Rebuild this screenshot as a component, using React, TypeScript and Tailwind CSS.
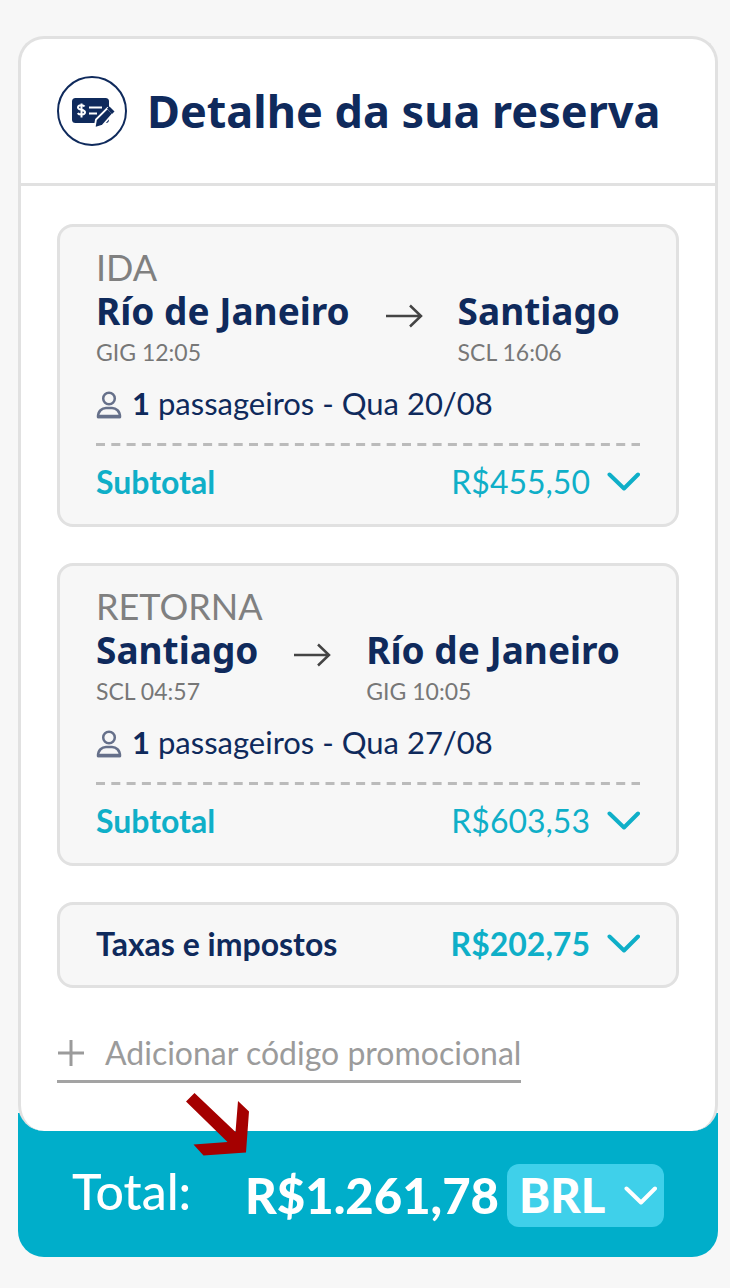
import React from "react";

type Stop = { city: string; code: string; time: string };
type Leg = {
  label: string;
  from: Stop;
  to: Stop;
  passengers: number;
  date: string;
  subtotal: string;
};

const legs: Leg[] = [
  {
    label: "IDA",
    from: { city: "Río de Janeiro", code: "GIG", time: "12:05" },
    to: { city: "Santiago", code: "SCL", time: "16:06" },
    passengers: 1,
    date: "Qua 20/08",
    subtotal: "R$455,50",
  },
  {
    label: "RETORNA",
    from: { city: "Santiago", code: "SCL", time: "04:57" },
    to: { city: "Río de Janeiro", code: "GIG", time: "10:05" },
    passengers: 1,
    date: "Qua 27/08",
    subtotal: "R$603,53",
  },
];

function BookingIcon() {
  return (
    <svg viewBox="0 0 70 70" className="size-[70px] shrink-0 text-[#0f2a5c]" aria-hidden="true">
      <circle cx="35" cy="35" r="34" fill="none" stroke="currentColor" strokeWidth="2" />
      <rect x="15" y="22" width="37" height="25" rx="3.5" fill="currentColor" />
      <path
        d="M27.500 30.500c-1-1.800-6.500-2-6.500.9 0 3.200 7 1.600 7 4.900 0 2.900-5.700 2.900-7.300.8M24.500 27.500v14"
        fill="none"
        stroke="white"
        strokeWidth="2"
      />
      <path d="M32 31.500h13M32 37.500h8" stroke="white" strokeWidth="2.200" />
      <path
        d="M37.500 52l1.500-8.500L50.500 32l5.500 5.500L45.500 49.500z"
        fill="currentColor"
        stroke="white"
        strokeWidth="1.800"
      />
      <path d="M50 32.500l2.500-2 5 5-2.500 2.500z" fill="currentColor" />
    </svg>
  );
}

function Chevron({ className }: { className: string }) {
  return (
    <svg
      viewBox="0 0 34 20"
      className={className}
      fill="none"
      stroke="currentColor"
      strokeWidth="4"
      strokeLinecap="round"
      strokeLinejoin="round"
      aria-hidden="true"
    >
      <path d="M3.500 2.500L18 16.500l14-14" />
    </svg>
  );
}

function ArrowRight() {
  return (
    <svg
      viewBox="0 0 38 24"
      className="mt-4 h-6 w-[38px] shrink-0 text-[#444]"
      fill="none"
      stroke="currentColor"
      strokeWidth="2.500"
      aria-label="para"
      role="img"
    >
      <path d="M1 12h35M25 1.500L36 12 25 22.500" />
    </svg>
  );
}

function PersonIcon() {
  return (
    <svg
      viewBox="0 0 26 28"
      className="mt-1 h-7 w-[26px] shrink-0 text-[#66708a]"
      fill="none"
      stroke="currentColor"
      strokeWidth="2.500"
      aria-hidden="true"
    >
      <circle cx="13" cy="7.500" r="5.800" />
      <path d="M2 26c0-6 4-9 8-9h6c4 0 8 3 8 9z" strokeLinejoin="round" />
      <path d="M1.500 25.500h23" strokeWidth="3.500" />
    </svg>
  );
}

function StopInfo({ stop }: { stop: Stop }) {
  return (
    <div>
      <p className="font-['Noto_Sans','Open_Sans',sans-serif] text-[37px] leading-[46px] font-bold text-[#0f2a5c]">
        {stop.city}
      </p>
      <p className="text-[23px] leading-9 text-[#777]">
        {stop.code} {stop.time}
      </p>
    </div>
  );
}

function LegCard({ leg }: { leg: Leg }) {
  return (
    <section className="rounded-[16px] border-[3px] border-[#e1e1e1] bg-[#f7f7f7] px-9 pt-5 pb-5">
      <h2 className="text-[36px] leading-[41px] text-[#808080]">{leg.label}</h2>
      <div className="flex items-start justify-between pr-5">
        <StopInfo stop={leg.from} />
        <ArrowRight />
        <StopInfo stop={leg.to} />
      </div>
      <p className="mt-[11px] flex items-center gap-2.5 text-[31px] leading-[44px] text-[#0f2a5c]">
        <PersonIcon />
        <span>
          <b>{leg.passengers}</b> passageiros - {leg.date}
        </span>
      </p>
      <svg className="mt-[18px] block h-[3px] w-full" aria-hidden="true">
        <line
          x1="0"
          y1="1.5"
          x2="100%"
          y2="1.5"
          stroke="#bbb"
          strokeWidth="3"
          strokeDasharray="9 6.300"
        />
      </svg>
      <button
        type="button"
        className="mt-[14px] flex w-full items-center justify-between text-[32px] leading-[44px] text-[#0fafc8]"
      >
        <span className="font-bold">Subtotal</span>
        <span className="flex items-center gap-4">
          {leg.subtotal}
          <Chevron className="h-5 w-[34px]" />
        </span>
      </button>
    </section>
  );
}

export default function App() {
  return (
    <div className="min-h-screen bg-[#f7f7f7] pt-9 pr-3 pb-[30px] pl-[18px] font-['Lato',sans-serif]">
      <main>
        <div className="relative z-10 rounded-[26px] border-[3px] border-b-0 border-[#e1e1e1] bg-white">
          <header className="flex items-center gap-5 border-b-[3px] border-[#e1e1e1] px-9 pt-[35px] pb-9">
            <BookingIcon />
            <h1 className="font-['Noto_Sans','Open_Sans',sans-serif] text-[45px] leading-[73px] font-bold whitespace-nowrap text-[#0f2a5c]">
              Detalhe da sua reserva
            </h1>
          </header>
          <div className="flex flex-col gap-9 px-9 pt-[38px] pb-12">
            {legs.map((leg) => (
              <LegCard key={leg.label} leg={leg} />
            ))}
            <button
              type="button"
              className="flex items-center justify-between rounded-[16px] border-[3px] border-[#e1e1e1] bg-[#f7f7f7] px-9 pt-4 pb-[18px] text-[32px] leading-[46px] font-bold"
            >
              <span className="text-[#0f2a5c]">Taxas e impostos</span>
              <span className="flex items-center gap-4 text-[#0fafc8]">
                R$202,75
                <Chevron className="h-5 w-[34px]" />
              </span>
            </button>
            <button
              type="button"
              className="flex items-center gap-5 self-start border-b-[3px] border-[#a3a3a3] pt-1 pb-0.5 text-[32px] leading-[50px] text-[#9b9b9b]"
            >
              <svg viewBox="0 0 28 28" className="size-7" stroke="currentColor" strokeWidth="3" aria-hidden="true">
                <path d="M14 1v26M1 14h26" />
              </svg>
              Adicionar código promocional
            </button>
          </div>
        </div>
        <footer className="relative -mt-[18px] flex items-start justify-between rounded-b-[26px] bg-[#00aeca] pt-[51px] pr-[54px] pb-[30px] pl-[54px] text-white">
          <span className="text-[50px] leading-[54px] font-medium">Total:</span>
          <div className="flex items-center gap-2">
            <strong className="text-[49px] leading-[63px] font-black">R$1.261,78</strong>
            <div className="relative">
              <select
                aria-label="Moeda"
                defaultValue="BRL"
                className="block h-[63px] w-[157px] appearance-none rounded-xl bg-[#3fd0ea] pl-3 text-[47px] leading-[63px] font-black text-white"
              >
                <option>BRL</option>
              </select>
              <Chevron className="pointer-events-none absolute top-[22px] right-[7px] h-5 w-[34px]" />
            </div>
          </div>
          <svg
            viewBox="0 0 64 64"
            className="pointer-events-none absolute -top-[21px] left-[168px] z-20 size-16 text-[#a50000]"
            fill="currentColor"
            aria-hidden="true"
          >
            <path d="M0 9.500L8.500 1l41 39L52 9l11 10.500-3 41-42.500 3L7.500 52.500l34-2.500z" />
          </svg>
        </footer>
      </main>
    </div>
  );
}
